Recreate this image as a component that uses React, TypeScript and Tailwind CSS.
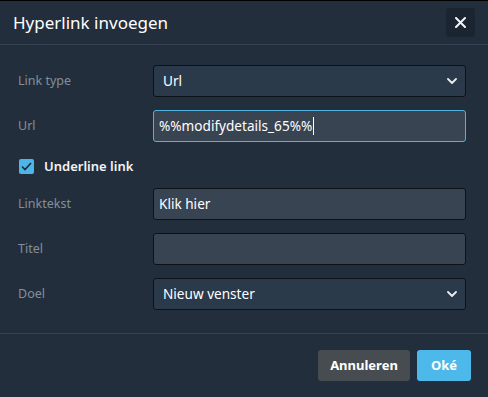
import React from "react";

const font = { fontFamily: '"Noto Sans", "Open Sans", sans-serif' };

function Chevron() {
  return (
    <svg width="10" height="6" viewBox="0 0 10 6" className="absolute right-[8px] top-1/2 -translate-y-1/2">
      <path d="M1 1 L5 5 L9 1" fill="none" stroke="#e8edf2" strokeWidth="1.8" strokeLinecap="round" strokeLinejoin="round" />
    </svg>
  );
}

function Label({ children }: { children: React.ReactNode }) {
  return <div className="w-[135px] shrink-0 text-[12.5px] text-[#848e99]">{children}</div>;
}

export default function App() {
  return (
    <div className="w-[488px] h-[397px] bg-[#232e3d] border-t border-black flex flex-col text-white" style={font}>
      <div className="h-[44px] flex items-center justify-between pl-[13px] pr-[13px] border-b border-[#364252] shrink-0">
        <div className="text-[17px] text-white">Hyperlink invoegen</div>
        <button className="w-[29px] h-[29px] rounded-[3px] bg-[#1b2532] flex items-center justify-center">
          <svg width="11" height="11" viewBox="0 0 11 11">
            <path d="M1 1 L10 10 M10 1 L1 10" stroke="#f2f5f8" strokeWidth="2" strokeLinecap="round" />
          </svg>
        </button>
      </div>
      <div className="flex flex-col pl-[18px] pr-[22px] pt-[20px] pb-[23px] border-b border-[#364252]">
        <div className="flex items-center">
          <Label>Link type</Label>
          <div className="relative flex-1 h-[32px] bg-[#2a3a4b] border border-[#0d1218] rounded-[3px] flex items-center pl-[9px] text-[13.6px]">
            Url
            <Chevron />
          </div>
        </div>
        <div className="flex items-center mt-[13px]">
          <Label>Url</Label>
          <div className="flex-1 h-[32px] bg-[#394452] border border-[#4fb3df] rounded-[3px] flex items-center pl-[5px] text-[13.6px]">
            %%modifydetails_65%%<span className="inline-block w-px h-[18px] bg-white ml-[1px]" />
          </div>
        </div>
        <div className="flex items-center mt-[17px] h-[15px] pl-px">
          <div className="w-[15px] h-[15px] rounded-[2px] bg-[#4db6e9] flex items-center justify-center">
            <svg width="11" height="9" viewBox="0 0 11 9">
              <path d="M1 4.5 L4 7.5 L10 1" fill="none" stroke="#1c2a38" strokeWidth="1.6" />
            </svg>
          </div>
          <span className="ml-[10px] text-[13px] font-semibold text-[#f2f4f6]">Underline link</span>
        </div>
        <div className="flex items-center mt-[14px]">
          <Label>Linktekst</Label>
          <div className="flex-1 h-[32px] bg-[#394452] border border-[#0d1218] rounded-[3px] flex items-center pl-[5px] text-[13.6px]">
            Klik hier
          </div>
        </div>
        <div className="flex items-center mt-[13px]">
          <Label>Titel</Label>
          <div className="flex-1 h-[32px] bg-[#394452] border border-[#0d1218] rounded-[3px]" />
        </div>
        <div className="flex items-center mt-[13px]">
          <Label>Doel</Label>
          <div className="relative flex-1 h-[32px] bg-[#2a3a4b] border border-[#0d1218] rounded-[3px] flex items-center pl-[9px] text-[13.6px]">
            Nieuw venster
            <Chevron />
          </div>
        </div>
      </div>
      <div className="flex justify-end items-start gap-[7px] pt-[16px] pr-[17px]">
        <button className="h-[31px] w-[92px] rounded-[3px] bg-[#474c50] text-[13px] font-bold text-white">Annuleren</button>
        <button className="h-[31px] w-[54px] rounded-[3px] bg-[#4db8ea] text-[13px] font-bold text-white">Oké</button>
      </div>
    </div>
  );
}
